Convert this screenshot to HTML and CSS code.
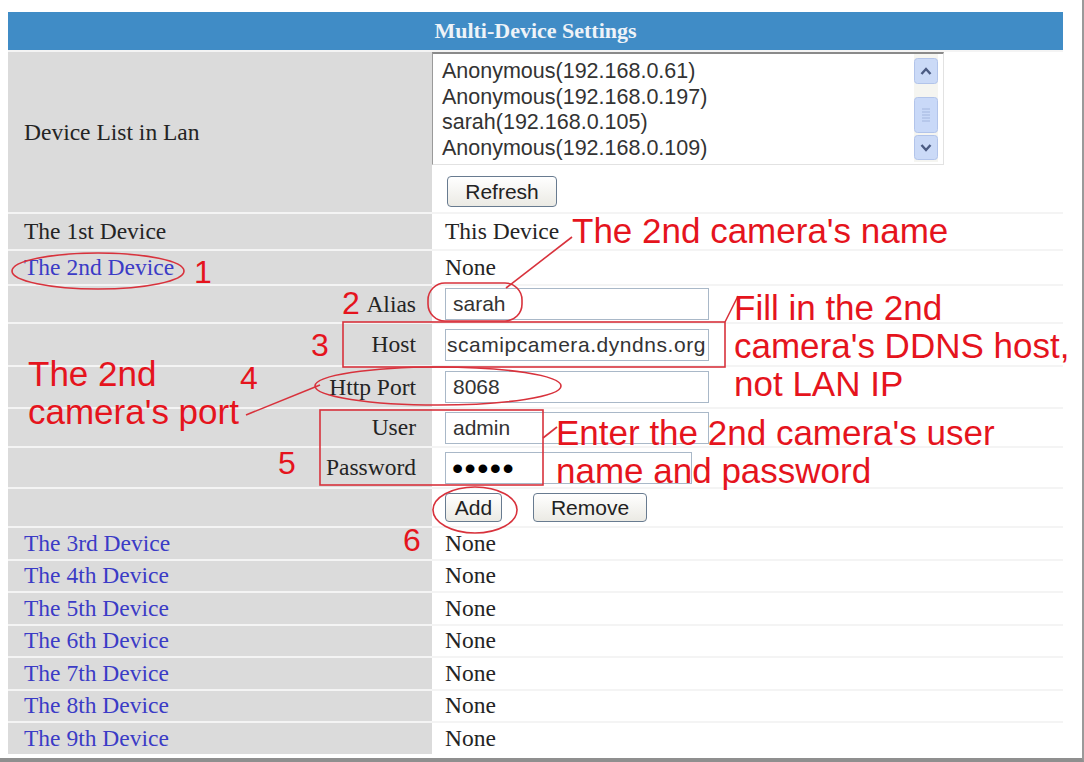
FILE: index.html
```html
<!DOCTYPE html>
<html>
<head>
<meta charset="utf-8">
<title>Multi-Device Settings</title>
<link rel="stylesheet" href="styles.css">
</head>
<body>
<div class="frame">
  <div class="panel">
    <div class="hdr">Multi-Device Settings</div>

    <div class="lbl">Device List in Lan</div>
    <div class="val val-list">
      <div class="listbox">
        <div class="items">
          <div>Anonymous(192.168.0.61)</div>
          <div>Anonymous(192.168.0.197)</div>
          <div>sarah(192.168.0.105)</div>
          <div>Anonymous(192.168.0.109)</div>
        </div>
        <svg class="sb" width="24" height="108" viewBox="0 0 24 108">
          <rect x="0" y="0" width="24" height="108" fill="#f5f5f1"/>
          <rect x="0.5" y="4.5" width="23" height="25" rx="3" fill="#cbdaf7" stroke="#b2c4ea"/>
          <polyline points="7.5,20 12,15 16.5,20" fill="none" stroke="#4b5b82" stroke-width="2.4"/>
          <rect x="0.5" y="43.5" width="23" height="35" rx="3" fill="#c9d9f8" stroke="#b2c4ea"/>
          <line x1="8" y1="55" x2="16" y2="55" stroke="#a3b6de"/>
          <line x1="8" y1="58" x2="16" y2="58" stroke="#a3b6de"/>
          <line x1="8" y1="61" x2="16" y2="61" stroke="#a3b6de"/>
          <line x1="8" y1="64" x2="16" y2="64" stroke="#a3b6de"/>
          <line x1="8" y1="67" x2="16" y2="67" stroke="#a3b6de"/>
          <rect x="0.5" y="81.5" width="23" height="24" rx="3" fill="#cbdaf7" stroke="#b2c4ea"/>
          <polyline points="7.5,91 12,96 16.5,91" fill="none" stroke="#4b5b82" stroke-width="2.4"/>
        </svg>
      </div>
      <button class="btn btn-refresh">Refresh</button>
    </div>

    <div class="lbl">The 1st Device</div>
    <div class="val">This Device</div>

    <div class="lbl link">The 2nd Device</div>
    <div class="val">None</div>

    <div class="lbl right">Alias</div>
    <div class="val"><div class="inp">sarah</div></div>

    <div class="lbl right">Host</div>
    <div class="val"><div class="inp inp-host">scamipcamera.dyndns.org</div></div>

    <div class="lbl right">Http Port</div>
    <div class="val"><div class="inp">8068</div></div>

    <div class="lbl right">User</div>
    <div class="val"><div class="inp">admin</div></div>

    <div class="lbl right">Password</div>
    <div class="val"><div class="inp inp-pass">•••••</div></div>

    <div class="lbl"></div>
    <div class="val btns">
      <button class="btn btn-add">Add</button>
      <button class="btn btn-remove">Remove</button>
    </div>

    <div class="lbl link">The 3rd Device</div>
    <div class="val">None</div>
    <div class="lbl link">The 4th Device</div>
    <div class="val">None</div>
    <div class="lbl link">The 5th Device</div>
    <div class="val">None</div>
    <div class="lbl link">The 6th Device</div>
    <div class="val">None</div>
    <div class="lbl link">The 7th Device</div>
    <div class="val">None</div>
    <div class="lbl link">The 8th Device</div>
    <div class="val">None</div>
    <div class="lbl link">The 9th Device</div>
    <div class="val">None</div>
  </div>

  <svg class="marks" width="1084" height="762" viewBox="0 0 1084 762">
    <g fill="none" stroke="#d8323c" stroke-width="1.6">
      <ellipse cx="98" cy="271" rx="86" ry="18"/>
      <rect x="428" y="283" width="94" height="38" rx="17"/>
      <line x1="572" y1="237" x2="506" y2="288"/>
      <rect x="343" y="322" width="382" height="45"/>
      <line x1="725" y1="322" x2="738" y2="296"/>
      <ellipse cx="438" cy="386" rx="123" ry="19"/>
      <line x1="246" y1="415" x2="320" y2="385"/>
      <rect x="320" y="410" width="223" height="75"/>
      <line x1="543" y1="438" x2="557" y2="427"/>
      <ellipse cx="475" cy="510" rx="42" ry="23"/>
    </g>
  </svg>

  <div class="note n-name">The 2nd camera's name</div>
  <div class="note n-host">Fill in the 2nd<br>camera's DDNS host,<br>not LAN IP</div>
  <div class="note n-port">The 2nd<br>camera's port</div>
  <div class="note n-user">Enter the 2nd camera's user<br>name and password</div>

  <div class="num d1">1</div>
  <div class="num d2">2</div>
  <div class="num d3">3</div>
  <div class="num d4">4</div>
  <div class="num d5">5</div>
  <div class="num d6">6</div>
</div>
</body>
</html>
```

FILE: styles.css
```css
html, body {
  margin: 0;
  padding: 0;
  background: #ffffff;
}

.frame {
  position: relative;
  box-sizing: border-box;
  width: 1084px;
  height: 762px;
  padding: 12px 0 0 8px;
  border-right: 2px solid #9a9a9a;
  border-bottom: 4px solid #8f8f8f;
  background: #ffffff;
  overflow: hidden;
}

.panel {
  display: grid;
  width: 1055px;
  grid-template-columns: 424px 631px;
  grid-template-rows: 38px 160px 35px 33px 36px 41px 40px 37px 39px 37px repeat(7, 30.5px);
  row-gap: 2px;
  background: #f4f4f4;
  font-family: "Liberation Serif", "Times New Roman", serif;
  font-size: 23.5px;
  color: #242424;
}

.hdr {
  grid-column: 1 / 3;
  background: #408cc6;
  color: #eef3f8;
  font-weight: bold;
  font-size: 22px;
  display: flex;
  align-items: center;
  justify-content: center;
}

.lbl {
  background: #dbdbdb;
  display: flex;
  align-items: center;
  padding-left: 16px;
  white-space: nowrap;
}

.lbl.right {
  justify-content: flex-end;
  padding-left: 0;
  padding-right: 16px;
}

.lbl.link {
  color: #3b3bc6;
}

.val {
  display: flex;
  align-items: center;
  padding-left: 13px;
  white-space: nowrap;
  background: #ffffff;
}

.val-list {
  flex-direction: column;
  align-items: flex-start;
  justify-content: flex-start;
}

.listbox {
  box-sizing: border-box;
  width: 512px;
  height: 113px;
  margin-left: -13px;
  border-top: 2px solid #8a8a8a;
  border-left: 1px solid #9a9a9a;
  border-right: 1px solid #e2e2e2;
  border-bottom: 1px solid #e2e2e2;
  display: flex;
  justify-content: space-between;
  font-family: "Liberation Sans", Arial, sans-serif;
  font-size: 21.5px;
  color: #333333;
}

.items {
  padding: 5px 0 0 9px;
  line-height: 25.5px;
}

.sb {
  margin: 0 5px 0 0;
  flex: none;
}

.btn {
  box-sizing: border-box;
  font-family: "Liberation Sans", Arial, sans-serif;
  font-size: 21px;
  color: #222222;
  border: 1px solid #687b90;
  border-radius: 4px;
  background: linear-gradient(#ffffff, #ebeae4);
  padding: 0;
  line-height: 1;
}

.btn-refresh {
  width: 110px;
  height: 31px;
  margin: 11px 0 0 2px;
}

.btns {
  gap: 31px;
}

.btn-add {
  width: 57px;
  height: 29px;
}

.btn-remove {
  width: 114px;
  height: 29px;
}

.inp {
  box-sizing: border-box;
  width: 264px;
  height: 32px;
  border: 1px solid #a9b8c8;
  padding-left: 7px;
  font-family: "Liberation Sans", Arial, sans-serif;
  font-size: 21px;
  line-height: 30px;
  color: #333333;
  overflow: hidden;
  white-space: nowrap;
  background: #ffffff;
}

.inp-host {
  padding-left: 1px;
  letter-spacing: 0.55px;
}

.inp-pass {
  width: 247px;
  font-size: 32px;
  letter-spacing: 1.4px;
  color: #000000;
  padding-left: 6px;
  overflow: visible;
}

.marks {
  position: absolute;
  left: 0;
  top: 0;
  pointer-events: none;
}

.note {
  position: absolute;
  font-family: "Liberation Sans", Arial, sans-serif;
  font-size: 35px;
  color: #e5141d;
  white-space: nowrap;
  line-height: 38px;
}

.n-name { left: 572px; top: 211px; line-height: 40px; }
.n-host { left: 734px; top: 289px; }
.n-port { left: 28px; top: 355px; }
.n-user { left: 556px; top: 414px; }

.num {
  position: absolute;
  font-family: "Liberation Sans", Arial, sans-serif;
  font-size: 32px;
  line-height: 32px;
  color: #e5141d;
}

.d1 { left: 194px; top: 256px; }
.d2 { left: 342px; top: 287px; }
.d3 { left: 311px; top: 329px; }
.d4 { left: 240px; top: 362px; }
.d5 { left: 278px; top: 447px; }
.d6 { left: 403px; top: 524px; }
```
